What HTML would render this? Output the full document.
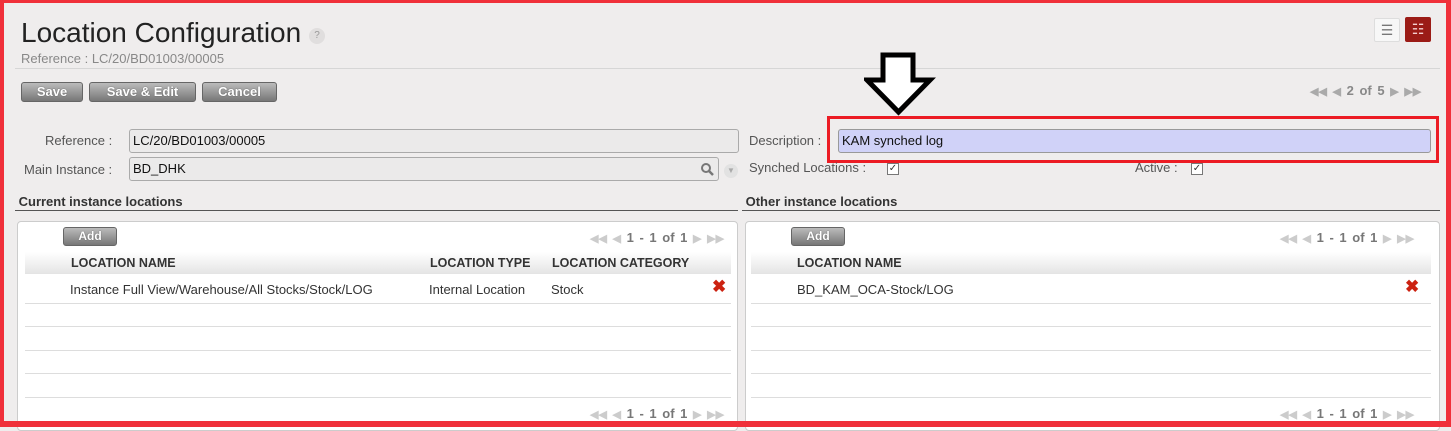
<!DOCTYPE html>
<html><head><style>
*{box-sizing:border-box;margin:0;padding:0}
body{width:1451px;height:427px;overflow:hidden;background:#efeded;font-family:"Liberation Sans",sans-serif;position:relative;color:#333}
.a{position:absolute}
.frame{left:0;top:0;width:1451px;height:427px;border:4px solid #f0303a;border-top-width:3px;border-bottom-width:6px;border-right-width:5px;z-index:10}
.btn{position:absolute;height:20px;border:1px solid #666;border-radius:3px;background:linear-gradient(#bbb,#777);color:#fff;font-weight:bold;font-size:13px;text-align:center;line-height:18px;text-shadow:0 0 1px #444}
.inp{position:absolute;height:24px;border:1px solid #aaa;border-radius:3px;background:#ebeaea;font-size:13px;line-height:22px;padding-left:3px;color:#111}
.lbl{position:absolute;font-size:13px;color:#555}
.pg{position:absolute;font-size:13px;color:#999;font-weight:bold;word-spacing:2px}
.pg i{font-style:normal;font-size:11px}
.panel{position:absolute;top:221px;height:210px;background:#fff;border:1px solid #ccc;border-radius:4px}
.hdr{position:absolute;top:30px;height:22px;background:linear-gradient(#fff,#e4e4e4);font-size:12.5px;font-weight:bold;color:#333;line-height:22px}
.row{position:absolute;height:1px;background:#ddd}
.cell{position:absolute;font-size:13px;color:#333}
.x{position:absolute;color:#c21;font-size:17px;font-weight:bold}
.sec{position:absolute;top:194px;font-size:13px;font-weight:bold;color:#333;border-bottom:1px solid #555;height:17px}
.cb{position:absolute;width:12px;height:12px;border:1px solid #777;background:#fff;font-size:10px;line-height:10px;text-align:center;color:#333}
</style></head><body>
<div class="a frame"></div>
<div class="a" style="left:21px;top:17px;font-size:28px;color:#222">Location Configuration</div>
<div class="a" style="left:309px;top:28px;width:16px;height:16px;border-radius:50%;background:#e0dede;font-size:10px;color:#999;text-align:center;line-height:16px">?</div>
<div class="a" style="left:21px;top:51px;font-size:13px;color:#888">Reference : LC/20/BD01003/00005</div>
<div class="a" style="left:1374px;top:18px;width:26px;height:24px;background:#f7f7f7;border:1px solid #ddd;border-radius:2px;color:#777;text-align:center;line-height:22px;font-size:14px">☰</div>
<div class="a" style="left:1405px;top:17px;width:26px;height:25px;background:#9b1b16;border-radius:2px;color:#f4d0d0;text-align:center;line-height:24px;font-size:14px">☷</div>
<div class="a" style="left:15px;top:68px;width:1425px;height:1px;background:#d6d6d6"></div>
<div class="btn" style="left:21px;top:82px;width:62px">Save</div>
<div class="btn" style="left:89px;top:82px;width:107px">Save &amp; Edit</div>
<div class="btn" style="left:202px;top:82px;width:75px">Cancel</div>
<div class="pg" style="left:1310px;top:83px;color:#aaa"><i>◀◀</i> <i>◀</i> <span style="color:#888">2 of 5</span> <i>▶</i> <i>▶▶</i></div>
<svg class="a" style="left:864px;top:52px" width="72" height="64"><path d="M19 3H49V28H66L34.5 60L3 28H19Z" fill="#fff" stroke="#000" stroke-width="5" stroke-linejoin="miter"/></svg>
<div class="lbl" style="left:45px;top:133px">Reference :</div>
<div class="inp" style="left:129px;top:129px;width:610px">LC/20/BD01003/00005</div>
<div class="lbl" style="left:24px;top:162px">Main Instance :</div>
<div class="inp" style="left:129px;top:157px;width:590px">BD_DHK<svg style="position:absolute;right:4px;top:5px" width="13" height="13"><circle cx="5" cy="5" r="4" fill="none" stroke="#777" stroke-width="2"/><path d="M8 8L12 12" stroke="#777" stroke-width="2.5"/></svg></div>
<div class="a" style="left:724px;top:164px;width:14px;height:14px;border-radius:50%;background:#e2e2e2;color:#aaa;font-size:8px;text-align:center;line-height:14px">▼</div>
<div class="lbl" style="left:749px;top:133px">Description :</div>
<div class="inp" style="left:838px;top:129px;width:593px;background:#d0d2f8;border-color:#999">KAM synched log</div>
<div class="a" style="left:827px;top:116px;width:612px;height:47px;border:3px solid #ec1c24"></div>
<div class="lbl" style="left:749px;top:160px">Synched Locations :</div>
<div class="cb" style="left:887px;top:163px">✓</div>
<div class="lbl" style="left:1135px;top:160px">Active :</div>
<div class="cb" style="left:1191px;top:163px">✓</div>
<div class="sec" style="left:15px;width:723px">&nbsp;Current instance locations</div>
<div class="sec" style="left:742px;width:698px">&nbsp;Other instance locations</div>
<div class="panel" style="left:17px;width:721px">
 <div class="btn" style="left:45px;top:5px;width:54px;height:19px;font-size:12px;line-height:17px">Add</div>
 <div class="pg" style="left:572px;top:8px;color:#ccc"><i>◀◀</i> <i>◀</i> <span style="color:#777">1 - 1 of 1</span> <i>▶</i> <i>▶▶</i></div>
 <div class="hdr" style="left:7px;width:706px"><span class="a" style="left:46px">LOCATION NAME</span><span class="a" style="left:405px">LOCATION TYPE</span><span class="a" style="left:527px">LOCATION CATEGORY</span></div>
 <div class="cell" style="left:52px;top:60px">Instance Full View/Warehouse/All Stocks/Stock/LOG</div>
 <div class="cell" style="left:411px;top:60px">Internal Location</div>
 <div class="cell" style="left:533px;top:60px">Stock</div>
 <div class="x" style="left:694px;top:55px">✖</div>
 <div class="row" style="left:7px;width:706px;top:81px"></div>
 <div class="row" style="left:7px;width:706px;top:104px"></div>
 <div class="row" style="left:7px;width:706px;top:128px"></div>
 <div class="row" style="left:7px;width:706px;top:151px"></div>
 <div class="row" style="left:7px;width:706px;top:175px"></div>
 <div class="pg" style="left:572px;top:184px;color:#ccc"><i>◀◀</i> <i>◀</i> <span style="color:#777">1 - 1 of 1</span> <i>▶</i> <i>▶▶</i></div>
</div>
<div class="panel" style="left:745px;width:695px">
 <div class="btn" style="left:45px;top:5px;width:54px;height:19px;font-size:12px;line-height:17px">Add</div>
 <div class="pg" style="left:534px;top:8px;color:#ccc"><i>◀◀</i> <i>◀</i> <span style="color:#777">1 - 1 of 1</span> <i>▶</i> <i>▶▶</i></div>
 <div class="hdr" style="left:5px;width:680px"><span class="a" style="left:46px">LOCATION NAME</span></div>
 <div class="cell" style="left:51px;top:60px">BD_KAM_OCA-Stock/LOG</div>
 <div class="x" style="left:659px;top:55px">✖</div>
 <div class="row" style="left:5px;width:680px;top:81px"></div>
 <div class="row" style="left:5px;width:680px;top:104px"></div>
 <div class="row" style="left:5px;width:680px;top:128px"></div>
 <div class="row" style="left:5px;width:680px;top:151px"></div>
 <div class="row" style="left:5px;width:680px;top:175px"></div>
 <div class="pg" style="left:534px;top:184px;color:#ccc"><i>◀◀</i> <i>◀</i> <span style="color:#777">1 - 1 of 1</span> <i>▶</i> <i>▶▶</i></div>
</div>
</body></html>
